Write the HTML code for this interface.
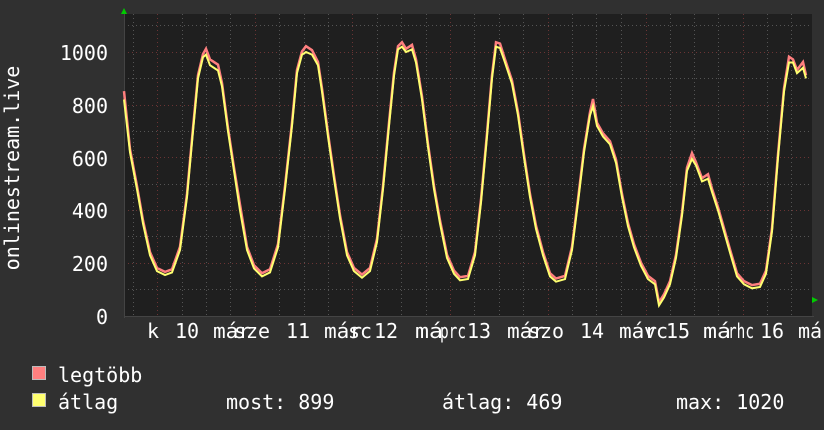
<!DOCTYPE html>
<html><head><meta charset="utf-8"><style>
html,body{margin:0;padding:0;background:#303030;}
svg{display:block}
text{font-family:"DejaVu Sans Mono","Liberation Mono",monospace;fill:#fff;font-size:20px}
</style></head><body>
<svg width="824" height="430" viewBox="0 0 824 430" xmlns="http://www.w3.org/2000/svg">
<rect width="824" height="430" fill="#303030"/>
<rect x="124" y="14" width="688" height="302" fill="#1f1f1f"/>
<g stroke="#555" stroke-width="1" stroke-dasharray="1,3">
<line x1="124" y1="25.5" x2="812" y2="25.5"/>
<line x1="124" y1="78.5" x2="812" y2="78.5"/>
<line x1="124" y1="131.5" x2="812" y2="131.5"/>
<line x1="124" y1="184.5" x2="812" y2="184.5"/>
<line x1="124" y1="236.5" x2="812" y2="236.5"/>
<line x1="124" y1="289.5" x2="812" y2="289.5"/>
</g>
<g stroke="#555" stroke-width="1" stroke-dasharray="1,3">
<line x1="133.5" y1="14" x2="133.5" y2="316"/>
<line x1="182.5" y1="14" x2="182.5" y2="316"/><line x1="206.5" y1="14" x2="206.5" y2="316"/><line x1="230.5" y1="14" x2="230.5" y2="316"/>
<line x1="279.5" y1="14" x2="279.5" y2="316"/><line x1="304.5" y1="14" x2="304.5" y2="316"/><line x1="328.5" y1="14" x2="328.5" y2="316"/>
<line x1="377.5" y1="14" x2="377.5" y2="316"/><line x1="401.5" y1="14" x2="401.5" y2="316"/><line x1="426.5" y1="14" x2="426.5" y2="316"/>
<line x1="474.5" y1="14" x2="474.5" y2="316"/><line x1="499.5" y1="14" x2="499.5" y2="316"/><line x1="523.5" y1="14" x2="523.5" y2="316"/>
<line x1="572.5" y1="14" x2="572.5" y2="316"/><line x1="596.5" y1="14" x2="596.5" y2="316"/><line x1="621.5" y1="14" x2="621.5" y2="316"/>
<line x1="670.5" y1="14" x2="670.5" y2="316"/><line x1="694.5" y1="14" x2="694.5" y2="316"/><line x1="718.5" y1="14" x2="718.5" y2="316"/>
<line x1="767.5" y1="14" x2="767.5" y2="316"/><line x1="791.5" y1="14" x2="791.5" y2="316"/>
</g>
<g stroke="#6a3434" stroke-width="1" stroke-dasharray="1,3">
<line x1="124" y1="52.5" x2="812" y2="52.5"/>
<line x1="124" y1="105.5" x2="812" y2="105.5"/>
<line x1="124" y1="157.5" x2="812" y2="157.5"/>
<line x1="124" y1="210.5" x2="812" y2="210.5"/>
<line x1="124" y1="263.5" x2="812" y2="263.5"/>
<line x1="157.5" y1="14" x2="157.5" y2="316"/>
<line x1="255.5" y1="14" x2="255.5" y2="316"/>
<line x1="352.5" y1="14" x2="352.5" y2="316"/>
<line x1="450.5" y1="14" x2="450.5" y2="316"/>
<line x1="548.5" y1="14" x2="548.5" y2="316"/>
<line x1="646.5" y1="14" x2="646.5" y2="316"/>
<line x1="743.5" y1="14" x2="743.5" y2="316"/>
</g>
<line x1="124" y1="316.5" x2="814" y2="316.5" stroke="#444"/>
<line x1="124.5" y1="12" x2="124.5" y2="318" stroke="#444"/>
<polygon points="121,14 127,14 124,8" fill="#00cc00"/>
<polygon points="812,297 812,303 818,300" fill="#00cc00"/>
<g transform="translate(0,316) scale(1,-0.264)">
<polyline fill="none" stroke="#ff7f7f" stroke-width="2.5" vector-effect="non-scaling-stroke" transform="translate(0,12)" points="124,840 130,620 137,480 143,350 150,230 157,170 165,155 172,165 180,250 187,450 193,700 198,900 203,980 206,1000 210,960 218,940 222,870 228,700 234,550 240,410 247,250 254,180 262,150 270,165 278,260 285,480 292,720 297,920 302,990 306,1010 312,995 318,950 322,850 328,680 334,520 340,370 347,230 354,170 362,145 370,170 377,280 383,480 389,720 394,910 398,1010 402,1025 406,1000 412,1015 416,960 422,820 428,640 434,480 440,350 447,220 454,160 460,135 468,140 475,230 481,430 487,680 492,900 496,1025 500,1020 505,960 512,880 518,760 524,600 530,450 536,330 543,230 550,150 556,130 565,140 572,250 578,430 584,620 590,760 593,810 597,720 603,680 610,650 616,580 622,450 628,340 634,260 641,190 648,140 655,120 659,40 664,70 670,120 676,220 682,380 687,550 692,605 696,570 702,510 708,525 712,470 718,400 724,320 730,240 737,150 744,120 752,105 760,110 766,160 772,320 778,600 784,850 789,970 793,960 797,920 803,950 806,900"/>
<polyline fill="none" stroke="#ffff70" stroke-width="2" vector-effect="non-scaling-stroke" points="124,820 130,620 137,480 143,350 150,230 157,170 165,155 172,165 180,250 187,450 193,700 198,900 203,980 206,990 210,950 218,930 222,870 228,700 234,550 240,400 247,250 254,180 262,150 270,165 278,260 285,480 292,720 297,920 302,990 306,1000 312,990 318,950 322,850 328,680 334,520 340,370 347,230 354,170 362,145 370,170 377,280 383,480 389,720 394,910 398,1010 402,1020 406,1000 412,1010 416,960 422,820 428,640 434,480 440,350 447,220 454,160 460,135 468,140 475,230 481,430 487,680 492,900 496,1020 500,1015 505,960 512,880 518,760 524,600 530,450 536,330 543,230 550,150 556,130 565,140 572,250 578,430 584,620 590,760 593,795 597,720 603,680 610,650 616,580 622,450 628,340 634,260 641,190 648,140 655,120 659,40 664,70 670,120 676,220 682,380 687,550 692,595 696,570 702,510 708,520 712,470 718,400 724,320 730,240 737,150 744,120 752,105 760,110 766,160 772,320 778,600 784,850 789,960 793,960 797,920 803,940 806,900"/>
</g>
<g text-anchor="end">
<text x="108" y="60">1000</text>
<text x="108" y="113">800</text>
<text x="108" y="166">600</text>
<text x="108" y="218">400</text>
<text x="108" y="271">200</text>
<text x="108" y="324">0</text>
</g>
<text transform="translate(19,168) rotate(-90)" text-anchor="middle">onlinestream.live</text>
<g>
<text x="147" y="338">k</text>
<text x="175" y="338">10</text>
<text x="213" y="338" textLength="38" lengthAdjust="spacingAndGlyphs">már</text>
<text x="234" y="338" textLength="36" lengthAdjust="spacingAndGlyphs">sze</text>
<text x="286" y="338">11</text>
<text x="324" y="338" textLength="38" lengthAdjust="spacingAndGlyphs">már</text>
<text x="348" y="338" textLength="24" lengthAdjust="spacingAndGlyphs">sc</text>
<text x="374" y="338">12</text>
<text x="415" y="338" textLength="28" lengthAdjust="spacingAndGlyphs">má</text>
<text x="440" y="338" textLength="26" lengthAdjust="spacingAndGlyphs">prc</text>
<text x="467" y="338">13</text>
<text x="507" y="338" textLength="38" lengthAdjust="spacingAndGlyphs">már</text>
<text x="528" y="338" textLength="36" lengthAdjust="spacingAndGlyphs">szo</text>
<text x="580" y="338">14</text>
<text x="619" y="338" textLength="38" lengthAdjust="spacingAndGlyphs">már</text>
<text x="644" y="338" textLength="24" lengthAdjust="spacingAndGlyphs">vc</text>
<text x="666" y="338">15</text>
<text x="703" y="338" textLength="28" lengthAdjust="spacingAndGlyphs">má</text>
<text x="728" y="338" textLength="26" lengthAdjust="spacingAndGlyphs">rhc</text>
<text x="760" y="338">16</text>
<text x="798" y="338">má</text>
</g>
<rect x="32.5" y="366.5" width="13" height="13" fill="#ff7f7f" stroke="#bbb"/>
<rect x="32.5" y="393.5" width="13" height="13" fill="#ffff70" stroke="#bbb"/>
<text x="58" y="382">legtöbb</text>
<text x="58" y="409">átlag</text>
<text x="226" y="409">most: 899</text>
<text x="442" y="409">átlag: 469</text>
<text x="676" y="409">max: 1020</text>
</svg>
</body></html>
